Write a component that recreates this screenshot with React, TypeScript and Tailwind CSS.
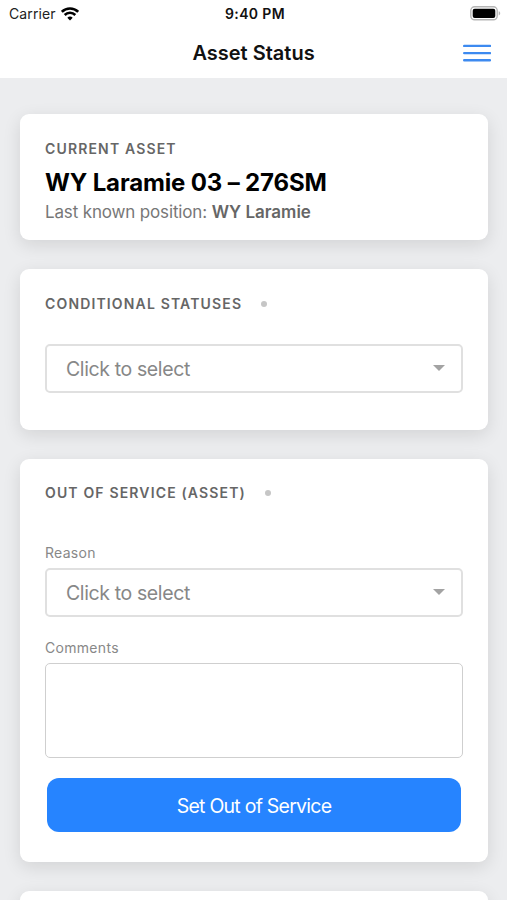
import type { ReactNode } from "react";

function Card({ className, children }: { className: string; children?: ReactNode }) {
  return (
    <section
      className={`shrink-0 rounded-[9px] bg-white px-[25px] shadow-[0_5px_18px_rgba(0,0,0,0.11)] ${className}`}
    >
      {children}
    </section>
  );
}

function CardTitle({ children, dot }: { children: ReactNode; dot?: boolean }) {
  return (
    <div className="flex h-5 items-center gap-[19px]">
      <h2 className="text-[14px] font-semibold leading-5 tracking-[1.15px] text-[#666666]">
        {children}
      </h2>
      {dot && <span className="size-[6px] rounded-full bg-[#c6c6c6]" />}
    </div>
  );
}

function Select({ className }: { className: string }) {
  return (
    <button
      className={`flex h-[49px] w-full items-center justify-between rounded-[5px] border-2 border-[#e0e0e0] bg-white pl-[19px] pr-[16px] ${className}`}
    >
      <span className="pt-px text-[19.5px] leading-6 tracking-[-0.38px] text-[#878787]">
        Click to select
      </span>
      <svg width="12" height="6" viewBox="0 0 12 6" className="mb-[2px]">
        <path d="M0 0h12L6 6z" fill="#a3a3a3" />
      </svg>
    </button>
  );
}

function WifiIcon() {
  return (
    <svg width="18" height="14" viewBox="0 0 18 14" fill="none" stroke="#000" strokeWidth="2.6">
      <path d="M0.8 4.9a11.6 11.6 0 0 1 16.4 0" />
      <path d="M3.7 8a7.5 7.5 0 0 1 10.6 0" />
      <path d="M9 13.6 6.3 10.8a3.8 3.8 0 0 1 5.4 0z" fill="#000" stroke="none" />
    </svg>
  );
}

function BatteryIcon() {
  return (
    <svg width="31" height="15" viewBox="0 0 31 15">
      <rect x="0.8" y="0.8" width="26.4" height="13" rx="3.8" fill="#fff" stroke="#b5b5b5" strokeWidth="1.4" />
      <rect x="2.7" y="2.7" width="22.6" height="9.2" rx="2" fill="#000" />
      <path d="M28.7 5.2c2 .6 2 3.6 0 4.2z" fill="#b5b5b5" />
    </svg>
  );
}

export default function App() {
  return (
    <div className="flex h-[900px] w-full flex-col overflow-hidden bg-[#ecedef] font-['Inter',sans-serif]">
      <header className="h-[78px] shrink-0 bg-white">
        <div className="grid h-[27px] grid-cols-[1fr_auto_1fr] items-center pl-[9px] pr-[6px]">
          <div className="flex items-center gap-[5px]">
            <span className="text-[14px] leading-5 tracking-[0.1px] text-[#222222]">Carrier</span>
            <WifiIcon />
          </div>
          <span className="text-[14px] font-semibold leading-5 tracking-[0.35px] text-[#111111]">
            9:40 PM
          </span>
          <div className="flex justify-end">
            <BatteryIcon />
          </div>
        </div>
        <div className="grid h-[51px] grid-cols-[1fr_auto_1fr] items-center px-4">
          <h1 className="col-start-2 text-[20px] font-semibold leading-6 text-[#111111]">
            Asset Status
          </h1>
          <button aria-label="Menu" className="justify-self-end">
            <svg width="28" height="18" viewBox="0 0 28 18" stroke="#3d8af0" strokeWidth="2.4" strokeLinecap="round">
              <path d="M1.2 1.9h25.8M1.2 9.1h25.8M1.2 16.3h25.8" />
            </svg>
          </button>
        </div>
      </header>

      <main className="flex flex-col gap-[29px] pl-[20px] pr-[19px] pt-9">
        <Card className="h-[126px] pt-[25px]">
          <CardTitle>CURRENT ASSET</CardTitle>
          <p className="mt-[9px] text-[24px] font-bold leading-[30px] tracking-[-0.15px] text-black">
            WY Laramie 03 – 276SM
          </p>
          <p className="mt-[4px] text-[17px] leading-5 tracking-[-0.15px] text-[#777777]">
            Last known position:{" "}
            <b className="font-semibold tracking-normal text-[#666666]">WY Laramie</b>
          </p>
        </Card>

        <Card className="h-[161px] pt-[25px]">
          <CardTitle dot>CONDITIONAL STATUSES</CardTitle>
          <Select className="mt-[30px]" />
        </Card>

        <Card className="h-[403px] pt-6">
          <CardTitle dot>OUT OF SERVICE (ASSET)</CardTitle>
          <p className="mt-10 text-[14px] leading-5 tracking-[0.3px] text-[#888888]">Reason</p>
          <Select className="mt-[5px]" />
          <p className="mt-[21px] text-[14px] leading-5 tracking-[0.3px] text-[#888888]">Comments</p>
          <textarea className="mt-[5px] block h-[95px] w-full resize-none rounded-[5px] border border-[#cfcfcf] bg-white outline-none" />
          <div className="mt-5 px-[2px]">
            <button className="h-[54px] w-full rounded-xl bg-[#2684ff] pt-[3px] text-[19.5px] tracking-[-0.75px] text-white">
              Set Out of Service
            </button>
          </div>
        </Card>

        <Card className="h-[160px]" />
      </main>
    </div>
  );
}
